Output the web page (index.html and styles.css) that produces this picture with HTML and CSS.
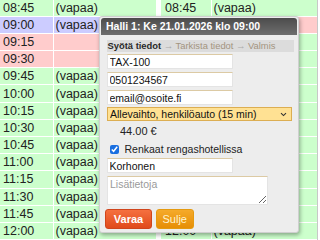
FILE: index.html
```html
<!DOCTYPE html>
<html>
<head>
<meta charset="utf-8">
<link rel="stylesheet" href="styles.css">
</head>
<body>
<div class="page">
  <div class="tables">
    <div class="table left">
      <div class="row g"><div class="t">08:45</div><div class="v">(vapaa)</div></div>
      <div class="row b"><div class="t">09:00</div><div class="v">(vapaa)</div></div>
      <div class="row p"><div class="t">09:15</div><div class="v"></div></div>
      <div class="row p"><div class="t">09:30</div><div class="v"></div></div>
      <div class="row g"><div class="t">09:45</div><div class="v">(vapaa)</div></div>
      <div class="row g"><div class="t">10:00</div><div class="v">(vapaa)</div></div>
      <div class="row g"><div class="t">10:15</div><div class="v">(vapaa)</div></div>
      <div class="row g"><div class="t">10:30</div><div class="v">(vapaa)</div></div>
      <div class="row g"><div class="t">10:45</div><div class="v">(vapaa)</div></div>
      <div class="row g"><div class="t">11:00</div><div class="v">(vapaa)</div></div>
      <div class="row g"><div class="t">11:15</div><div class="v">(vapaa)</div></div>
      <div class="row g"><div class="t">11:30</div><div class="v">(vapaa)</div></div>
      <div class="row g"><div class="t">11:45</div><div class="v">(vapaa)</div></div>
      <div class="row g"><div class="t">12:00</div><div class="v">(vapaa)</div></div>
    </div>
    <div class="table right">
      <div class="row g"><div class="t">08:45</div><div class="v">(vapaa)</div></div>
      <div class="row p"><div class="t"></div><div class="v"></div></div>
      <div class="row g"><div class="t"></div><div class="v"></div></div>
      <div class="row g"><div class="t"></div><div class="v"></div></div>
      <div class="row g"><div class="t"></div><div class="v"></div></div>
      <div class="row g"><div class="t"></div><div class="v"></div></div>
      <div class="row g"><div class="t"></div><div class="v"></div></div>
      <div class="row g"><div class="t"></div><div class="v"></div></div>
      <div class="row g"><div class="t"></div><div class="v"></div></div>
      <div class="row g"><div class="t"></div><div class="v"></div></div>
      <div class="row g"><div class="t"></div><div class="v"></div></div>
      <div class="row g"><div class="t"></div><div class="v"></div></div>
      <div class="row g"><div class="t"></div><div class="v"></div></div>
      <div class="row g"><div class="t">12:00</div><div class="v">(vapaa)</div></div>
    </div>
  </div>

  <div class="dialog">
    <div class="dlg-head">Halli 1: Ke 21.01.2026 klo 09:00</div>
    <div class="dlg-body">
      <div class="steps"><b class="cur">Syötä tiedot</b> <span class="arr">→</span> Tarkista tiedot <span class="arr">→</span> Valmis</div>
      <input class="inp first" type="text" value="TAX-100">
      <input class="inp" type="text" value="0501234567">
      <input class="inp" type="text" value="email@osoite.fi">
      <select class="sel"><option>Allevaihto, henkilöauto (15 min)</option></select>
      <div class="price">44.00 €</div>
      <label class="check"><input type="checkbox" checked><span>Renkaat rengashotellissa</span></label>
      <input class="inp name" type="text" value="Korhonen">
      <textarea class="ta" placeholder="Lisätietoja"></textarea>
      <div class="buttons">
        <button class="btn varaa">Varaa</button>
        <button class="btn sulje">Sulje</button>
      </div>
    </div>
  </div>
</div>
</body>
</html>
```

FILE: styles.css
```css
html, body {
  margin: 0;
  padding: 0;
  background: #fff;
  overflow: hidden;
}
.page {
  position: relative;
  width: 320px;
  height: 240px;
  overflow: hidden;
  font-family: "Liberation Sans", Arial, sans-serif;
  color: #222;
}
.tables {
  display: flex;
  gap: 5px;
  margin-top: -0.5px;
}
.table {
  width: 156px;
  display: flex;
  flex-direction: column;
}
.table.right {
  border-right: 1px solid #c8c8c8;
}
.row {
  display: flex;
  align-items: center;
  height: 16.2px;
  border-bottom: 1px solid #fff;
  font-size: 12.5px;
}
.row.g { background: #ccffcc; }
.row.p { background: #ffcccc; }
.row.b { background: #ccccff; }
.t {
  width: 50px;
  height: 100%;
  display: flex;
  align-items: center;
  padding-left: 3px;
  border-right: 1px solid #fff;
}
.right .t { width: 46px; padding-left: 4px; }
.v {
  flex: 1;
  padding-left: 1.5px;
}

.dialog {
  position: absolute;
  left: 99px;
  top: 16px;
  width: 200px;
  height: 217px;
  box-sizing: border-box;
  background: #ededed;
  border: 1px solid #cfcfcf;
  border-radius: 3px;
  padding: 1px;
  box-shadow: 1px 2px 4px rgba(0,0,0,0.35);
  font-size: 10.5px;
  color: #222;
}
.dlg-head {
  height: 17px;
  line-height: 17px;
  padding-left: 5px;
  color: #fff;
  font-weight: bold;
  font-size: 10.5px;
  background: linear-gradient(#4c4c4c, #6e6e6e);
  border-radius: 3px 3px 0 0;
}
.dlg-body {
  padding: 0 5.5px;
  display: flex;
  flex-direction: column;
  align-items: flex-start;
}
.steps {
  margin-top: 4.5px;
  width: 187px;
  height: 12.5px;
  line-height: 12.5px;
  box-sizing: border-box;
  padding-left: 1px;
  background: #dcdcdc;
  color: #a39480;
  font-size: 9.4px;
  white-space: nowrap;
  overflow: hidden;
}
.steps .cur { color: #2a2a2a; }
.steps .arr { color: #aaa; }
.inp {
  box-sizing: border-box;
  width: 126.5px;
  height: 15px;
  margin: 3px 0 0 0;
  padding: 0 2px;
  border: 1px solid #e4e4e4;
  border-top-color: #dccaa4;
  background: #fff;
  font-family: "Liberation Sans", Arial, sans-serif;
  font-size: 10.5px;
  color: #111;
  outline: none;
}
.inp.first { margin-top: 2px; }
.inp.name { margin-top: 1px; }
.sel {
  -webkit-appearance: none;
  appearance: none;
  box-sizing: border-box;
  width: 185.5px;
  height: 14px;
  margin-top: 2px;
  padding: 0 0 0 2.5px;
  border: 1px solid #dcae52;
  border-radius: 0;
  background-color: #ffe193;
  background-image: url("data:image/svg+xml;utf8,<svg xmlns='http://www.w3.org/2000/svg' width='7' height='5' viewBox='0 0 7 5'><path d='M1 1.2 L3.5 3.6 L6 1.2' fill='none' stroke='%23333' stroke-width='1.1'/></svg>");
  background-repeat: no-repeat;
  background-position: right 4px center;
  font-family: "Liberation Sans", Arial, sans-serif;
  font-size: 10.5px;
  line-height: 12px;
  color: #111;
}
.price {
  height: 20px;
  line-height: 20px;
  padding-left: 13.5px;
  font-size: 11px;
}
.check {
  display: flex;
  align-items: center;
  height: 16px;
}
.check input {
  width: 9px;
  height: 9px;
  margin: 0 0 0 3px;
  accent-color: #1a6fe0;
}
.check span {
  margin-left: 6px;
  font-size: 10.5px;
}
.ta {
  box-sizing: border-box;
  width: 161px;
  height: 28.5px;
  margin-top: 3px;
  padding: 1px 2.5px;
  border: 1px solid #e4e4e4;
  border-top-color: #dccaa4;
  background: #fff;
  font-family: "Liberation Sans", Arial, sans-serif;
  font-size: 10.5px;
  outline: none;
}
.ta::placeholder { color: #9a9a9a; }
.buttons {
  display: flex;
  gap: 3.5px;
  margin-top: 4px;
  margin-left: -1.5px;
}
.btn {
  height: 20px;
  box-sizing: border-box;
  border-radius: 3px;
  padding: 0;
  font-family: "Liberation Sans", Arial, sans-serif;
  font-size: 11px;
  cursor: pointer;
}
.varaa {
  width: 47px;
  color: #fff;
  font-weight: bold;
  border: 1px solid #d0451c;
  background: linear-gradient(#f5703f, #e04a1c);
}
.sulje {
  width: 38.5px;
  color: #fff4cf;
  border: 1px solid #e59a10;
  background: linear-gradient(#f5aa2a, #e68e05);
}
```
